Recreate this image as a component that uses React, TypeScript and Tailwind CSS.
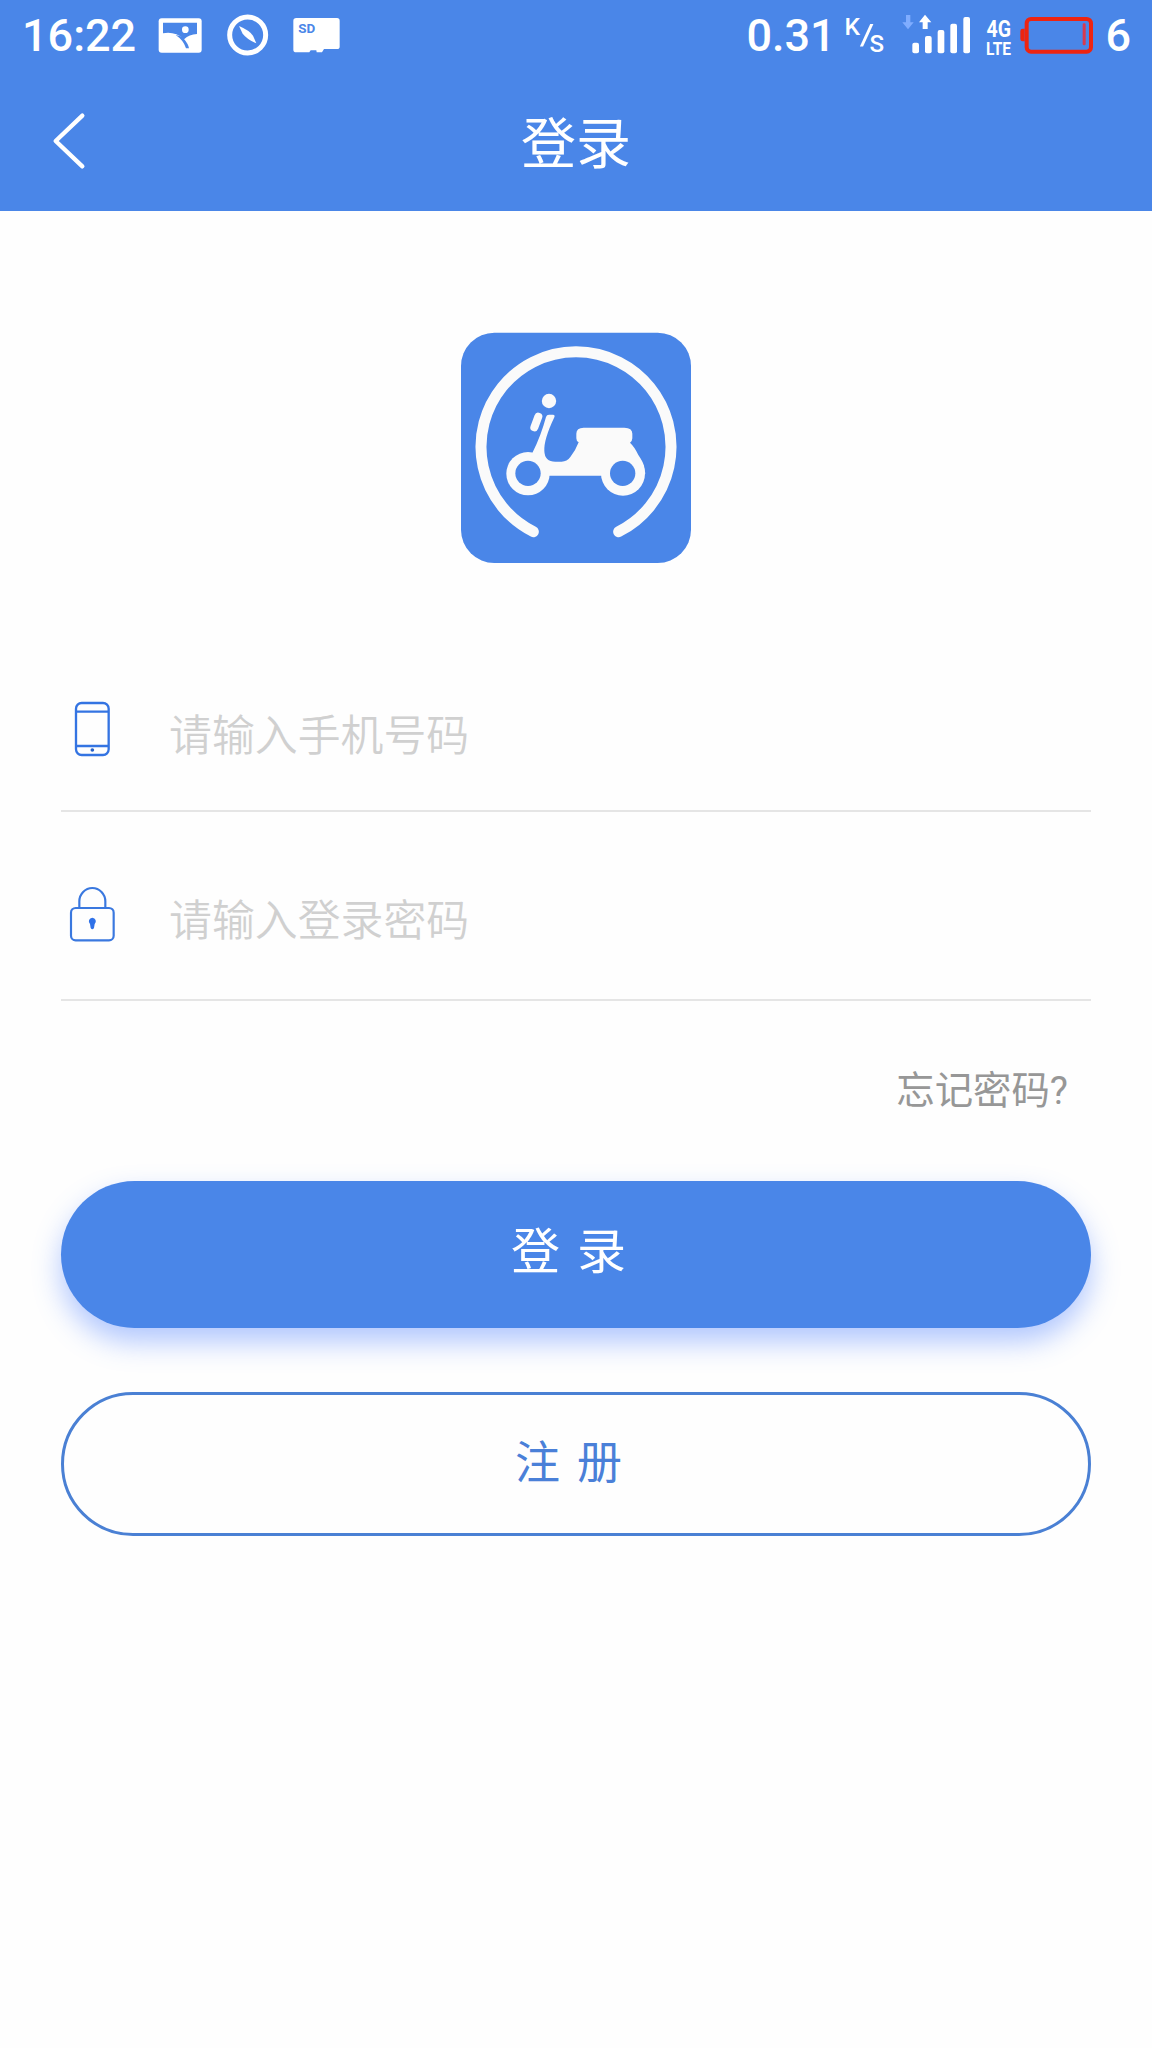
import React from "react";

const CJK = "font-['Roboto','Noto_Sans_CJK_SC',sans-serif]";

function StatusBar() {
  return (
    <div className="flex h-[72px] items-start font-['Roboto',sans-serif] font-medium text-white">
      <span className="ml-[22px] mt-[9px] w-[136px] text-[45px] leading-[53px]">16:22</span>
      <svg className="mt-[18px] h-[35px] w-[44px]" viewBox="475 53 132 105">
        <rect x="477" y="54" width="129" height="103" rx="9" fill="#fff" />
        <path d="M490 67h102v34q-24 1-38 15q-30-24-64-17z" fill="#4a86e8" />
        <path d="M528 104q24 16 31 40h9q-2-13-15-28l2-5z" fill="#4a86e8" />
        <circle cx="557" cy="88" r="10" fill="#fff" />
      </svg>
      <svg className="ml-[25px] mt-[14px] h-[42px] w-[42px]" viewBox="680 43 126 126">
        <circle cx="742" cy="106" r="54" fill="none" stroke="#fff" strokeWidth="15" />
        <path d="M716 79q31 13 42 29l10 23q-28-12-41-29z" fill="#fff" />
      </svg>
      <svg className="ml-[24px] mt-[17px] h-[36px] w-[48px]" viewBox="878 51 144 108">
        <path d="M888 54h122q8 0 8 8v78q0 7-8 7h-39l-6 10h-16l-1-6h-17l-4 6h-39q-9 0-9-8V62q0-8 9-8z" fill="#fff" />
        <text x="894" y="99" fontSize="38" fontWeight="700" textLength="51" lengthAdjust="spacingAndGlyphs" fill="#4a86e8">SD</text>
      </svg>
      <div className="ml-auto flex items-start">
        <span className="mt-[9px] w-[98px] text-[45px] leading-[53px]">0.31</span>
        <svg className="mt-[9px] h-[52px] w-[42px] overflow-visible" viewBox="843 9 42 52" fill="#fff">
          <text x="843.500" y="35" fontSize="24" textLength="15.500" lengthAdjust="spacingAndGlyphs">K</text>
          <text x="868.500" y="52" fontSize="24">S</text>
          <path d="M869.200 24h3.200l-10.300 22.500h-3.200z" />
        </svg>
        <svg className="ml-[16px] mt-[13px] h-[42px] w-[72px]" viewBox="515 39 216 126" fill="#fff">
          <path d="M527 45h13v22h10l-17 21l-17-21h11z" fill="#80adff" />
          <path d="M584 44l19 23h-11v20h-15V67h-11z" />
          <rect x="546" y="128" width="20" height="32" rx="6" />
          <rect x="584" y="108" width="20" height="52" rx="6" />
          <rect x="622" y="90" width="20" height="70" rx="6" />
          <rect x="660" y="71" width="20" height="89" rx="6" />
          <rect x="699" y="51" width="20" height="109" rx="6" />
        </svg>
        <svg className="ml-[11px] mt-[13px] h-[48px] w-[28px] overflow-visible" viewBox="984 13 28 48" fill="#fff">
          <text x="985.500" y="37" fontSize="23.500" fontWeight="700" textLength="24.500" lengthAdjust="spacingAndGlyphs">4G</text>
          <text x="985" y="55" fontSize="17.500" fontWeight="700" textLength="25" lengthAdjust="spacingAndGlyphs">LTE</text>
        </svg>
        <svg className="ml-[7px] mt-[16px] h-[39px] w-[74px]" viewBox="868 48 222 117">
          <rect x="888" y="57" width="193" height="98" rx="13" fill="none" stroke="#ee2410" strokeWidth="12" />
          <path d="M882 86h-6q-7 0-7 7v24q0 7 7 7h6z" fill="#ee2410" />
          <rect x="1056" y="70" width="9" height="66" rx="4" fill="#d83a50" />
        </svg>
        <span className="ml-[11px] mr-[21px] mt-[9px] text-[45px] leading-[53px]">6</span>
      </div>
    </div>
  );
}

function Logo() {
  return (
    <svg className="h-[232px] w-[232px]" viewBox="30 36 696 696" fill="#fafafa">
      <rect x="33" y="38" width="690" height="691" rx="100" fill="#4a86e8" />
      <path d="M250 635A285 285 0 1 1 506 635" fill="none" stroke="#fafafa" strokeWidth="33" strokeLinecap="round" />
      <circle cx="297" cy="243" r="21.500" />
      <path d="M265 290L253 322" stroke="#fafafa" strokeWidth="24" strokeLinecap="round" />
      <circle cx="234" cy="461" r="65" />
      <circle cx="519" cy="461" r="66" />
      <path d="M288 291q2-7 9-7h12q7 0 4 8q-32 67-30 101q1 32 33 32h19q16 0 26-14q16-20 25-44q-7-3-7-12v-14q0-18 22-18h122q24 0 24 18v14q0 8-7 13q14 13 25 37q13 19 17 32l4 24H520L453 467H290L234 440L248 397q25-50 40-106z" />
      <circle cx="234" cy="460" r="38" fill="#4a86e8" />
      <circle cx="518" cy="460" r="38" fill="#4a86e8" />
    </svg>
  );
}

function PhoneIcon() {
  return (
    <svg className="h-[56px] w-[36px] shrink-0" viewBox="102 62 108 168" fill="none" stroke="#3474e2" strokeWidth="7">
      <rect x="108" y="68" width="98" height="156" rx="17" />
      <path d="M108 94h98M108 197h98" />
      <circle cx="157" cy="209" r="5.500" fill="#2460c8" stroke="none" />
    </svg>
  );
}

function LockIcon() {
  return (
    <svg className="h-[56px] w-[48px] shrink-0" viewBox="87 49 144 168" fill="none" stroke="#3a78df" strokeWidth="6.500">
      <rect x="93" y="115" width="128" height="97" rx="14" />
      <path d="M118 115V95a39 40 0 0 1 78 0v20" />
      <path d="M157 144a11 11 0 0 1 7 19l-2 12q-5 8-10 0l-2-12a11 11 0 0 1 7-19z" fill="#2f71e8" stroke="none" />
    </svg>
  );
}

export default function App() {
  return (
    <main className={`flex h-[2048px] w-[1152px] flex-col bg-[#fefefe] ${CJK}`}>
      <header className="h-[211px] bg-[#4a86e8]">
        <StatusBar />
        <div className="grid h-[138px] grid-cols-[1fr_auto_1fr] items-center">
          <svg className="ml-[52px] h-[58px] w-[34px]" viewBox="156 338 102 174" fill="none" stroke="#fff" strokeWidth="13" strokeLinecap="round" strokeLinejoin="round">
            <path d="M247 349L167 425L247 501" />
          </svg>
          <h1 className="pt-[6px] text-[55px] leading-[80px] text-white">登录</h1>
        </div>
      </header>

      <div className="mt-[121px] flex justify-center">
        <Logo />
      </div>

      <form className="mx-[61px] mt-[88px] flex flex-col">
        <label className="flex h-[160px] items-center border-b-2 border-[#e5e5e5] pb-[4px]">
          <span className="flex w-[108px] pl-[13px]"><PhoneIcon /></span>
          <span className="mt-[13px] text-[42.900px] font-[350] leading-[64px] text-[#d0d0d0]">请输入手机号码</span>
        </label>
        <label className="flex h-[189px] items-center border-b-2 border-[#e5e5e5] pt-[17px]">
          <span className="flex w-[108px] pl-[8px]"><LockIcon /></span>
          <span className="mt-[13px] text-[42.900px] font-[350] leading-[64px] text-[#d0d0d0]">请输入登录密码</span>
        </label>
        <a className="mr-[23px] mt-[62px] self-end text-[38.400px] leading-[56px] text-[#979797]">忘记密码?</a>
        <button type="button" className="mt-[62px] flex h-[147px] items-center justify-center rounded-full bg-[#4a86e8] pb-[3px] pr-[15px] text-[49px] text-white shadow-[0_14px_28px_rgba(72,125,255,0.42)]">
          登<span className="w-[17px]" />录
        </button>
        <button type="button" className="mt-[64px] flex h-[144px] items-center justify-center rounded-full border-[3px] border-[#4a80d4] pb-[1px] pr-[15px] text-[45px] text-[#4a80d8]">
          注<span className="w-[17px]" />册
        </button>
      </form>
    </main>
  );
}
